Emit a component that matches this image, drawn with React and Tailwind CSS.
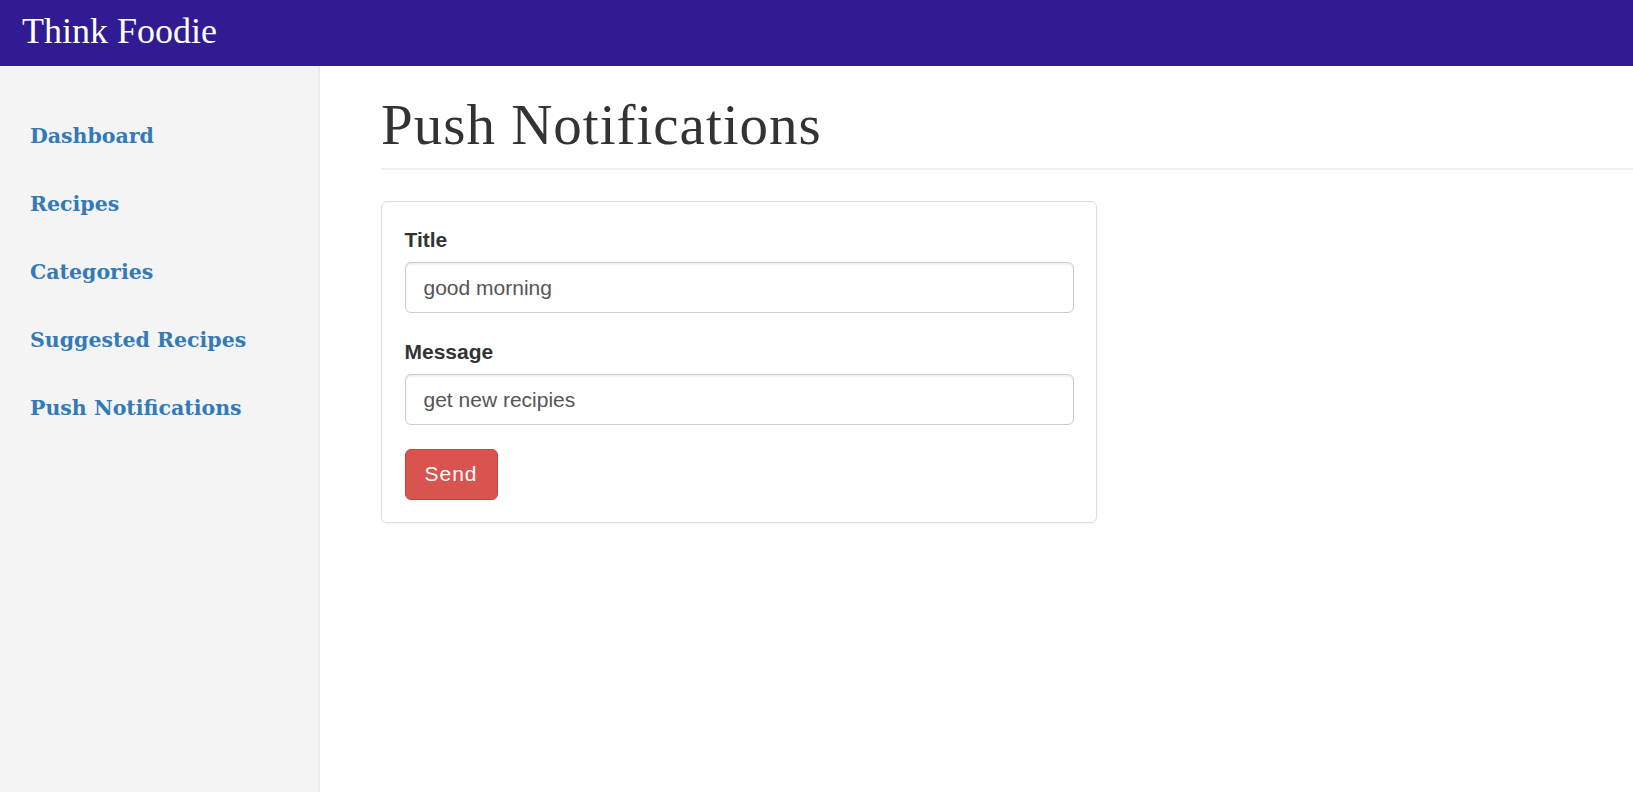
export default function App() {
  const links = ["Dashboard", "Recipes", "Categories", "Suggested Recipes", "Push Notifications"];
  return (
    <div className="min-h-screen flex flex-col bg-white" style={{ fontFamily: '"Liberation Serif", serif' }}>
      <header className="h-[66px] bg-[#301b92] flex items-center px-[22px] shrink-0">
        <span className="text-white text-[36px] leading-none pb-[4px]">Think Foodie</span>
      </header>
      <div className="flex flex-1 min-h-[726px]">
        <aside className="w-[320px] shrink-0 bg-[#f4f4f4] border-r-2 border-[#ebebeb] pt-[55px] pl-[30px]">
          <ul className="flex flex-col gap-[38px]" style={{ fontFamily: '"DejaVu Serif", serif' }}>
            {links.map((l) => (
              <li key={l}>
                <a href="#" className="text-[#337ab7] font-bold text-[20.5px] leading-[30px]">{l}</a>
              </li>
            ))}
          </ul>
        </aside>
        <main className="flex-1 pl-[61px] pt-[27px]">
          <div className="border-b-2 border-[#eeeeee] pb-[11px]">
            <h1 className="text-[#333333] text-[57px] leading-[64px] tracking-[1px]">Push Notifications</h1>
          </div>
          <div className="mt-[31px] w-[716px] border-[1.5px] border-[#dddddd] rounded-[6px] shadow-[0_1px_2px_rgba(0,0,0,0.05)] p-[22.5px]" style={{ fontFamily: '"Liberation Sans", Arial, sans-serif' }}>
            <div className="mb-[23.5px]">
              <label className="block font-bold text-[21px] leading-[30px] text-[#333333] mb-[7.5px]">Title</label>
              <input
                defaultValue="good morning"
                className="block w-full h-[51px] px-[18px] text-[21px] text-[#555555] border-[1.5px] border-[#cccccc] rounded-[6px] shadow-[inset_0_1.5px_1.5px_rgba(0,0,0,0.075)] outline-none"
              />
            </div>
            <div className="mb-[23.5px]">
              <label className="block font-bold text-[21px] leading-[30px] text-[#333333] mb-[7.5px]">Message</label>
              <input
                defaultValue="get new recipies"
                className="block w-full h-[51px] px-[18px] text-[21px] text-[#555555] border-[1.5px] border-[#cccccc] rounded-[6px] shadow-[inset_0_1.5px_1.5px_rgba(0,0,0,0.075)] outline-none"
              />
            </div>
            <button className="h-[51px] px-[19px] bg-[#d9534f] border-[1.5px] border-[#d43f3a] rounded-[6px] text-white text-[21px] leading-[30px] tracking-[1px]">
              Send
            </button>
          </div>
        </main>
      </div>
    </div>
  );
}
